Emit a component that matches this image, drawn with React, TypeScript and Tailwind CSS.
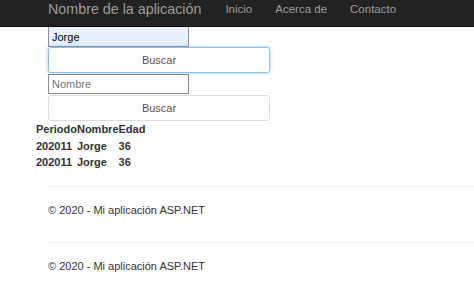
import React from 'react';

const rows = [
  { periodo: '202011', nombre: 'Jorge', edad: '36' },
  { periodo: '202011', nombre: 'Jorge', edad: '36' },
];

const Footer: React.FC = () => (
  <div className="pl-[48px]">
    <hr className="border-t border-[#eeeeee]" />
    <p className="pt-[15px] pb-[24px] text-[11px] leading-[16px] text-[#333]">© 2020 - Mi aplicación ASP.NET</p>
  </div>
);

export default function App() {
  return (
    <div className="h-[289px] overflow-hidden bg-white font-['Liberation_Sans',Arial,sans-serif] text-[#333]">
      {/* Navbar */}
      <nav className="h-[27px] bg-[#222] border-b border-[#080808] flex items-center pl-[48px]">
        <span className="text-[14.3px] text-[#9d9d9d] mr-[24px] leading-none -mt-[7px]">Nombre de la aplicación</span>
        <div className="flex items-center gap-[23px] text-[11.5px] text-[#9d9d9d] -mt-[7px]">
          <span>Inicio</span>
          <span>Acerca de</span>
          <span>Contacto</span>
        </div>
      </nav>

      {/* Form */}
      <div className="pl-[48px] flex flex-col">
        <input
          readOnly
          value="Jorge"
          className="w-[141px] h-[20px] border border-t-0 border-[#8f8f8f] bg-[#e8f0fe] px-[3px] text-[11px] text-black outline-none"
        />
        <button className="w-[222px] h-[26px] rounded-[3px] border border-[#8ebde6] bg-white text-[11px] text-[#555] shadow-[0_0_4px_rgba(102,175,233,0.6)]">
          Buscar
        </button>
        <input
          readOnly
          placeholder="Nombre"
          className="mt-[1px] w-[141px] h-[20px] border border-[#8f8f8f] bg-white px-[3px] text-[11px] text-black placeholder:text-[#757575] outline-none"
        />
        <button className="mt-[1px] w-[222px] h-[26px] rounded-[3px] border border-[#ddd] bg-white text-[11px] text-[#555]">
          Buscar
        </button>
      </div>

      {/* Table */}
      <table className="ml-[36px] border-collapse text-[11px] font-bold text-[#333] leading-[16.5px]">
        <thead>
          <tr>
            <th className="p-0 text-left">Periodo</th>
            <th className="p-0 text-left">Nombre</th>
            <th className="p-0 text-left">Edad</th>
          </tr>
        </thead>
        <tbody>
          {rows.map((r, i) => (
            <tr key={i}>
              <td className="p-0">{r.periodo}</td>
              <td className="p-0">{r.nombre}</td>
              <td className="p-0">{r.edad}</td>
            </tr>
          ))}
        </tbody>
      </table>

      <div className="mt-[15px]">
        <Footer />
        <Footer />
      </div>
    </div>
  );
}
